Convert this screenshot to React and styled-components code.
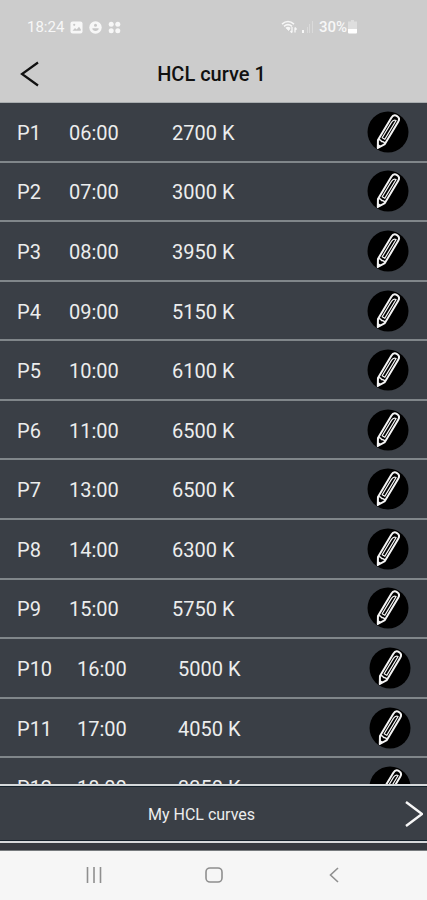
import React from "react";
import styled, { createGlobalStyle } from "styled-components";

const Global = createGlobalStyle`
  * { box-sizing: border-box; }
  body { margin: 0; background: #f6f6f6; font-family: Roboto, "Liberation Sans", sans-serif; }
  svg { display: block; }
`;

const Screen = styled.div`
  display: flex;
  flex-direction: column;
  height: 100vh;
  overflow: hidden;
  background: #3a3f46;
`;

const PlainButton = styled.button`
  padding: 0;
  border: 0;
  background: none;
  color: inherit;
  font: inherit;
  cursor: pointer;
`;

const StatusBar = styled.div`
  display: flex;
  flex: none;
  align-items: center;
  justify-content: space-between;
  height: 54px;
  padding: 0 70px 0 27px;
  background: #cccccc;
  color: #f7f7f7;
  font-size: 15px;
  line-height: 18px;
`;

const StatusGroup = styled.div`
  display: flex;
  align-items: center;
  gap: ${(p) => p.$gap}px;
`;

const BatteryLevel = styled.span`
  font-weight: 500;
`;

const Header = styled.header`
  display: grid;
  flex: none;
  grid-template-columns: 60px 1fr 64px;
  align-items: center;
  height: 49px;
  padding-bottom: 8px;
  background: #cccccc;
  border-bottom: 1px solid #a9adaf;
`;

const BackButton = styled(PlainButton)`
  display: flex;
  align-items: center;
  height: 40px;
  padding-left: 20px;
`;

const Title = styled.h1`
  margin: 0;
  color: #111;
  font-size: 20px;
  line-height: 24px;
  font-weight: 500;
  text-align: center;
`;

const ListArea = styled.main`
  flex: 1;
  min-height: 0;
  overflow: hidden;
`;

const PointTable = styled.table`
  display: block;
  width: 100%;
`;

const PointBody = styled.tbody`
  display: grid;
  grid-template-rows: repeat(12, 1fr);
  height: 715px;
`;

const PointRow = styled.tr`
  display: grid;
  grid-template-columns: ${(p) => (p.$wide ? "60px 101px" : "52px 103px")} 1fr auto;
  align-items: center;
  padding: 0 ${(p) => (p.$wide ? 16 : 18)}px 0 17px;
  border-bottom: 2px solid #80868a;
  color: #eceded;
  font-size: 20px;
  line-height: 24px;
`;

const Name = styled.th`
  padding: 2px 0 0;
  font-weight: 400;
  text-align: left;
`;

const Value = styled.td`
  padding: 2px 0 0;
`;

const Action = styled.td`
  padding: 0;
`;

const EditButton = styled(PlainButton)`
  display: block;
  width: 42px;
  height: 42px;
  border-radius: 50%;
`;

const CurvesButton = styled(PlainButton)`
  display: grid;
  flex: none;
  grid-template-columns: 1fr 24px;
  align-items: center;
  width: 100%;
  height: 59px;
  border-top: 2px solid #d5d9db;
  border-bottom: 2px solid #d5d9db;
  box-shadow: inset 0 1px #14222c, inset 0 -1px #14222c;
  color: #eceded;
  font-size: 16px;
  line-height: 20px;
  text-align: center;
`;

const CurvesLabel = styled.span`
  padding-top: 2px;
`;

const Strip = styled.div`
  flex: none;
  height: 8px;
  background: #353a40;
  border-bottom: 1px solid #777b7e;
`;

const SystemNav = styled.nav`
  display: grid;
  flex: none;
  grid-template-columns: repeat(3, 120px);
  justify-content: center;
  height: 49px;
  padding-bottom: 2px;
  background: #f6f6f6;
`;

const NavButton = styled(PlainButton)`
  display: flex;
  align-items: center;
  justify-content: center;
`;

const PictureIcon = () => (
  <svg width="13" height="13" viewBox="0 0 13 13" aria-hidden="true">
    <rect x="0.5" y="0.5" width="12" height="12" rx="2" fill="#f7f7f7" />
    <path d="M2.5 9.8 5 7l1.7 1.6L9 5.8l1.8 2.4v1.6z" fill="#c8c8c8" />
    <circle cx="4.2" cy="3.8" r="1.1" fill="#c8c8c8" />
  </svg>
);

const PersonIcon = () => (
  <svg width="13" height="13" viewBox="0 0 13 13" aria-hidden="true">
    <circle cx="6.5" cy="6.5" r="6.2" fill="#f7f7f7" />
    <circle cx="6.5" cy="4.2" r="1.5" fill="#c8c8c8" />
    <path d="M3.3 7.2h6.4c0 1.8-1.4 2.8-3.2 2.8S3.3 9 3.3 7.2z" fill="#c8c8c8" />
  </svg>
);

const DotsIcon = () => (
  <svg width="13" height="13" viewBox="0 0 13 13" fill="#f7f7f7" aria-hidden="true">
    <circle cx="3.2" cy="3.2" r="2.5" />
    <circle cx="9.8" cy="3.2" r="2.5" />
    <circle cx="3.2" cy="9.8" r="2.5" />
    <circle cx="9.8" cy="9.8" r="2.5" />
  </svg>
);

const WifiIcon = () => (
  <svg width="16" height="14" viewBox="0 0 16 14" fill="none" stroke="#f7f7f7" aria-hidden="true">
    <path d="M1 4.2Q7 -1.2 13 4.2M3 6.3Q7 3 11 6.3M5 8.4Q7 6.8 9 8.4" strokeWidth="1.6" />
    <path d="M6 8.5 7.5 10.5 9 8.5z" fill="#f7f7f7" />
    <path d="M11 7v5.5M9.5 11l1.5 1.7M14 12.5V7.5M14 7.5l1.5 2" strokeWidth="1.3" />
  </svg>
);

const SignalIcon = () => (
  <svg width="14" height="14" viewBox="0 0 14 14" aria-hidden="true">
    <path d="M1 10h2v3H1z" fill="#f7f7f7" />
    <path d="M6 7h1v6H6zM8 4h1v9H8zM11 1h1v12h-1z" fill="#dadada" />
  </svg>
);

const BatteryIcon = () => (
  <svg width="9" height="14" viewBox="0 0 9 14" aria-hidden="true">
    <path d="M3 0h3v1.5h3V9H0V1.5h3z" fill="#dedede" />
    <path d="M0 9h9v3.5q0 1-1 1H1q-1 0-1-1z" fill="#fff" />
  </svg>
);

const PencilIcon = () => (
  <svg width="42" height="42" viewBox="0 0 42 42" fill="none" aria-hidden="true">
    <circle cx="21" cy="21" r="20.5" fill="#000" />
    <g transform="translate(10.8 37) rotate(31)" stroke="#f4f4f4" strokeLinejoin="round">
      <path d="M0 0-4-7V-33Q-4-37.3 0-37.3T4-33V-7z" strokeWidth="2" />
      <path d="M-4-7.500Q-2-9 0-7.500Q2-9 4-7.500" strokeWidth="1.6" />
      <path d="M-1.500-11V-29Q-1.500-33 1.500-33V-11z" strokeWidth="1.2" />
      <path d="M0 0-1.500-3H1.500z" fill="#f4f4f4" strokeWidth="1" />
    </g>
  </svg>
);

const points = [
  ["06:00", 2700],
  ["07:00", 3000],
  ["08:00", 3950],
  ["09:00", 5150],
  ["10:00", 6100],
  ["11:00", 6500],
  ["13:00", 6500],
  ["14:00", 6300],
  ["15:00", 5750],
  ["16:00", 5000],
  ["17:00", 4050],
  ["18:00", 3350],
];

export default function App() {
  return (
    <Screen>
      <Global />
      <StatusBar>
        <StatusGroup $gap={6}>
          <span>18:24</span>
          <PictureIcon />
          <PersonIcon />
          <DotsIcon />
        </StatusGroup>
        <StatusGroup $gap={4}>
          <WifiIcon />
          <SignalIcon />
          <StatusGroup $gap={1}>
            <BatteryLevel>30%</BatteryLevel>
            <BatteryIcon />
          </StatusGroup>
        </StatusGroup>
      </StatusBar>
      <Header>
        <BackButton aria-label="Back">
          <svg width="19" height="26" viewBox="0 0 19 26" fill="none" stroke="#111" strokeWidth="2.2" aria-hidden="true">
            <path d="M18 1.5 2 13 18 24.5" />
          </svg>
        </BackButton>
        <Title>HCL curve 1</Title>
      </Header>
      <ListArea>
        <PointTable aria-label="Curve points">
          <PointBody>
            {points.map(([time, kelvin], i) => (
              <PointRow key={time} $wide={i >= 9}>
                <Name scope="row">P{i + 1}</Name>
                <Value>{time}</Value>
                <Value>{kelvin} K</Value>
                <Action>
                  <EditButton aria-label={`Edit P${i + 1}`}>
                    <PencilIcon />
                  </EditButton>
                </Action>
              </PointRow>
            ))}
          </PointBody>
        </PointTable>
      </ListArea>
      <CurvesButton>
        <CurvesLabel>My HCL curves</CurvesLabel>
        <svg width="20" height="28" viewBox="0 0 20 28" fill="none" stroke="#f7f7f7" strokeWidth="2.4" aria-hidden="true">
          <path d="M3 2 19 14 3 26" />
        </svg>
      </CurvesButton>
      <Strip />
      <SystemNav aria-label="System">
        <NavButton aria-label="Recent apps">
          <svg width="16" height="16" viewBox="0 0 16 16" stroke="#8f8f8f" strokeWidth="1.6" aria-hidden="true">
            <path d="M1.5 0v16M8 0v16M14.5 0v16" />
          </svg>
        </NavButton>
        <NavButton aria-label="Home">
          <svg width="18" height="16" viewBox="0 0 18 16" fill="none" stroke="#8f8f8f" strokeWidth="1.6" aria-hidden="true">
            <rect x="1" y="1" width="16" height="14" rx="4" />
          </svg>
        </NavButton>
        <NavButton aria-label="Go back">
          <svg width="10" height="16" viewBox="0 0 10 16" fill="none" stroke="#8f8f8f" strokeWidth="1.6" aria-hidden="true">
            <path d="M9 1 1.5 8 9 15" />
          </svg>
        </NavButton>
      </SystemNav>
    </Screen>
  );
}
